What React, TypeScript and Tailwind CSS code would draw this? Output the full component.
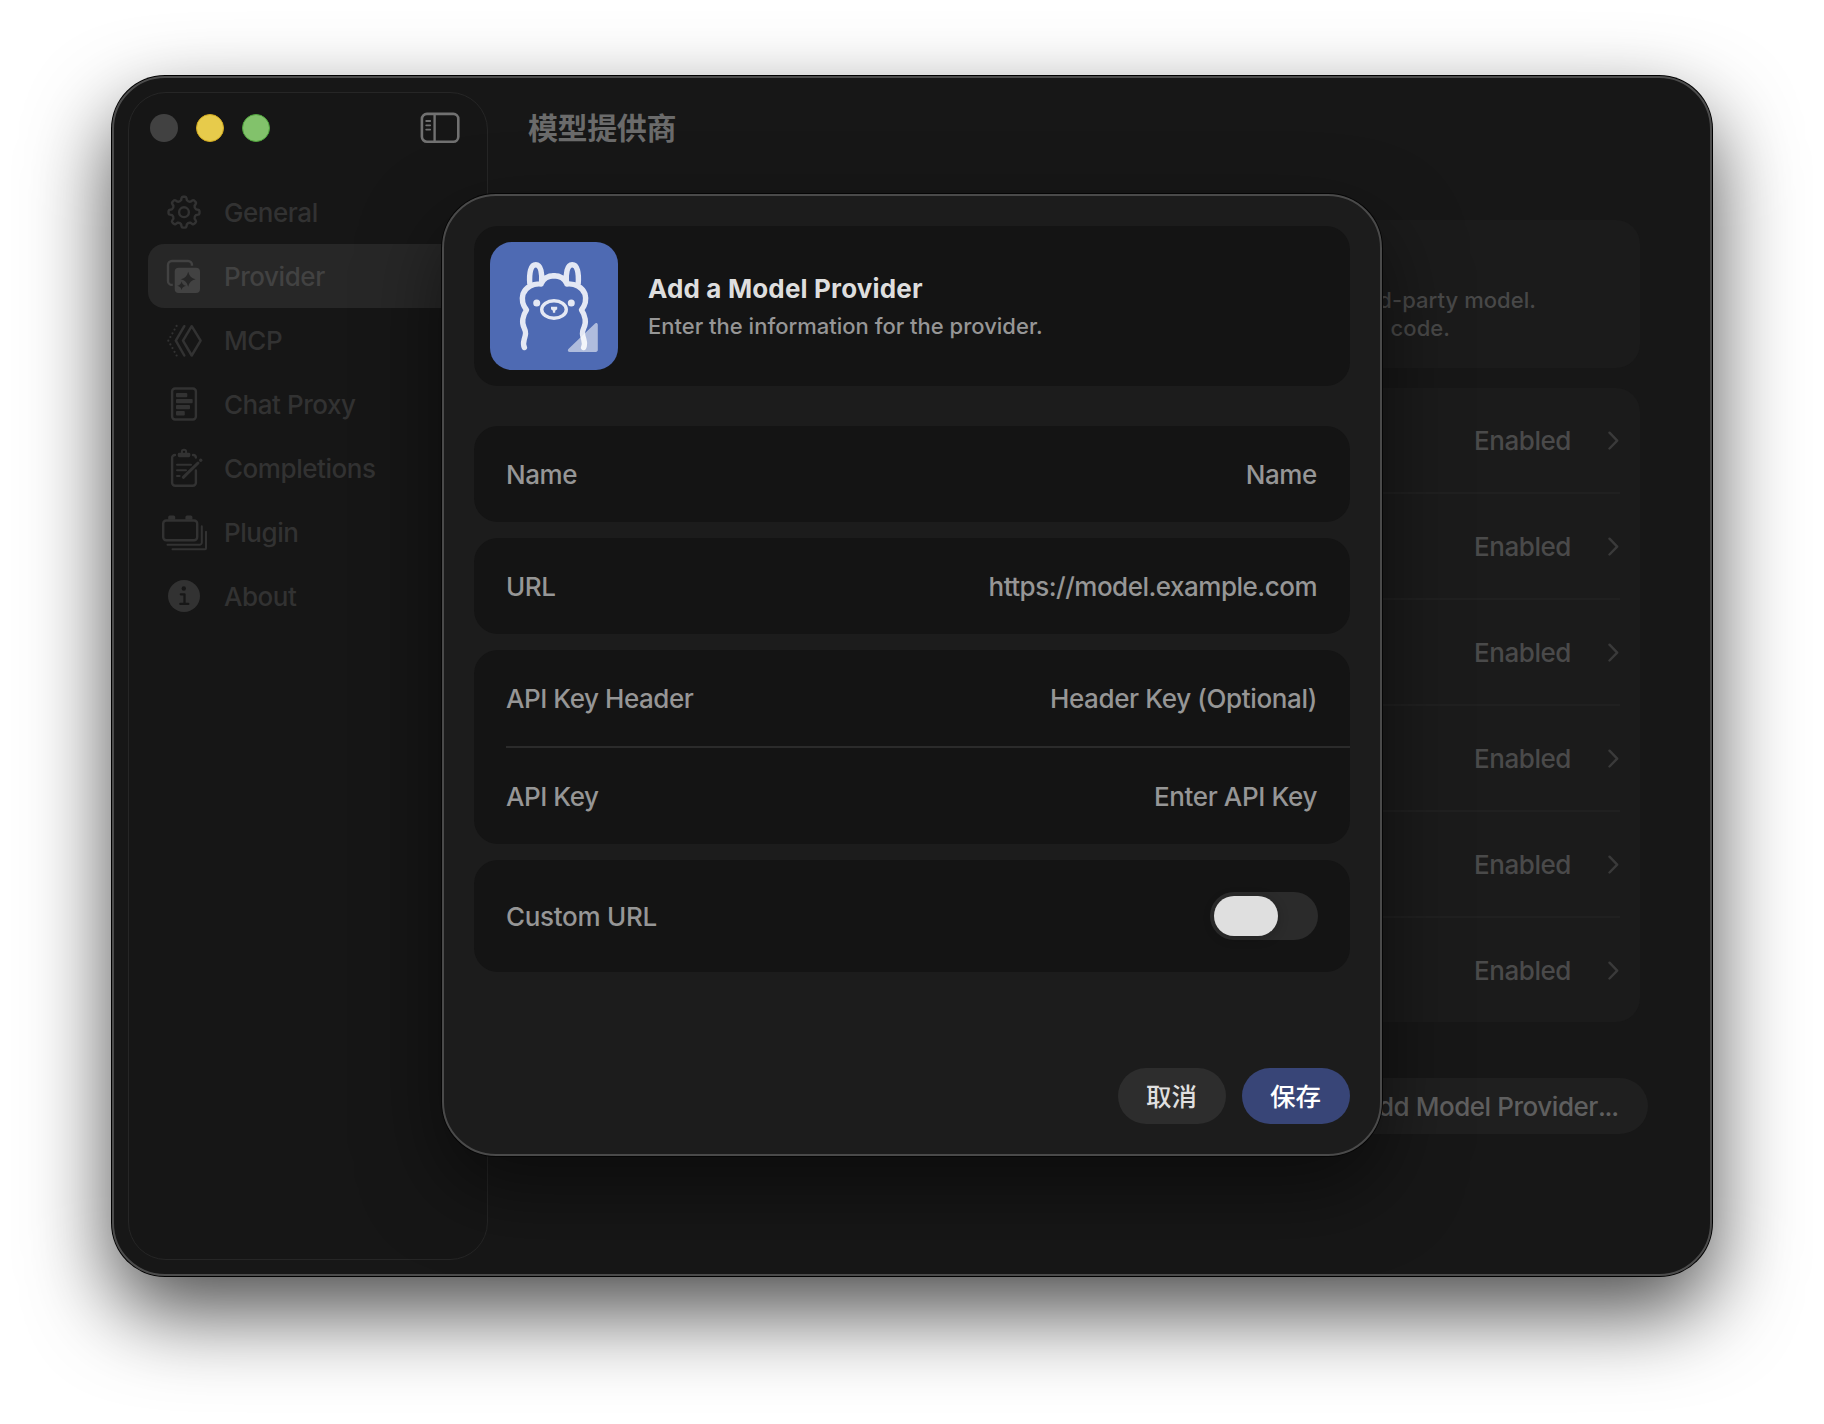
import React from 'react';

type IconProps = { children: React.ReactNode };

function Icon({ children }: IconProps) {
  return (
    <svg
      viewBox="0 0 48 48"
      className="h-12 w-12 shrink-0"
      fill="none"
      stroke="currentColor"
      strokeWidth={2.4}
      strokeLinecap="round"
      strokeLinejoin="round"
    >
      {children}
    </svg>
  );
}

/* Eight-toothed gear outline, centred on 24,24. */
function gearPath(): string {
  const p = (deg: number, r: number) => {
    const a = ((deg - 90) * Math.PI) / 180;
    return `${(24 + r * Math.cos(a)).toFixed(2)} ${(24.2 + r * Math.sin(a)).toFixed(2)}`;
  };
  let d = `M${p(-13.5, 12.4)}`;
  for (let k = 0; k < 8; k++) {
    const c = k * 45;
    d += `L${p(c - 10, 14.3)}Q${p(c - 8.5, 15.5)} ${p(c - 4, 15.5)}L${p(c + 4, 15.5)}Q${p(c + 8.5, 15.5)} ${p(c + 10, 14.3)}`;
    d += `L${p(c + 13.5, 12.4)}Q${p(c + 22.5, 11)} ${p(c + 31.5, 12.4)}`;
  }
  return d + 'Z';
}

const GearIcon = () => (
  <Icon>
    <path d={gearPath()} />
    <circle cx="24" cy="24.2" r="4.9" />
  </Icon>
);

const ProviderIcon = () => (
  <Icon>
    <path d="M12.8 32.9H12a4 4 0 0 1-4-4V13a4 4 0 0 1 4-4h16a4 4 0 0 1 4 4v.8" strokeLinecap="butt" />
    <path
      stroke="none"
      fill="currentColor"
      fillRule="evenodd"
      d="M18.7 15.7H36a4 4 0 0 1 4 4V37a4 4 0 0 1-4 4H18.7a4 4 0 0 1-4-4V19.7a4 4 0 0 1 4-4ZM28.2 19.8c1.4 4.6 2.9 6.1 7.5 7.5-4.6 1.4-6.1 2.9-7.5 7.5-1.4-4.6-2.9-6.1-7.5-7.5 4.6-1.4 6.1-2.9 7.5-7.5ZM21.6 29.5c.8 2.7 1.6 3.5 4.3 4.3-2.7.8-3.5 1.6-4.3 4.3-.8-2.7-1.6-3.5-4.3-4.3 2.7-.8 3.5-1.6 4.3-4.3Z"
    />
  </Icon>
);

const McpIcon = () => (
  <Icon>
    <path d="M31.7 10.2 40.6 24.7 31.7 39.5 23 24.7Z" strokeWidth="2.5" />
    <path d="M24.3 10.2 15.8 24.7 24.3 39.5" strokeWidth="2.5" />
    <path d="M16.6 9.9 8.3 24.7 16.6 39.5" strokeWidth="2.2" strokeDasharray="0 4.24" />
  </Icon>
);

const ChatIcon = () => (
  <Icon>
    <rect x="12.1" y="8.5" width="23.8" height="31" rx="3" />
    <g stroke="none" fill="currentColor">
      <rect x="16" y="13" width="11.3" height="4.2" rx=".9" />
      <rect x="16" y="19" width="16.7" height="4.2" rx=".9" />
      <rect x="16" y="25" width="14" height="4.2" rx=".9" />
      <rect x="16" y="31" width="8.8" height="4.4" rx=".9" />
    </g>
  </Icon>
);

const CompletionsIcon = () => (
  <Icon>
    <path d="M15 11h-.1a2.8 2.8 0 0 0-2.8 2.8V38.8a3 3 0 0 0 3 3h17.8a3 3 0 0 0 3-3V26.5M33 11h.1A2.8 2.8 0 0 1 35.9 13.5" />
    <circle cx="24" cy="8" r="2.2" strokeWidth="1.9" />
    <rect x="17.8" y="8.8" width="12.5" height="4.4" rx="1.4" fill="currentColor" stroke="none" />
    <path d="M17 20.7h14M17 26.3h9M17 32.1h2.6" strokeWidth="2" />
    <path d="M23.3 33.3 38 19" strokeWidth="3" />
    <circle cx="40.7" cy="16.3" r="1.7" fill="currentColor" stroke="none" />
  </Icon>
);

const PluginIcon = () => (
  <Icon>
    <rect x="3.2" y="12.5" width="34" height="19.8" rx="3" />
    <path
      d="M8.2 11.8V9a1.5 1.5 0 0 1 1.5-1.5h4A1.5 1.5 0 0 1 15.2 9v2.8ZM25.4 11.8V9a1.5 1.5 0 0 1 1.5-1.5h4A1.5 1.5 0 0 1 32.4 9v2.8Z"
      fill="currentColor"
      stroke="none"
    />
    <path d="M7.5 36.8h32a2.3 2.3 0 0 0 2.3-2.3V18.3M12.5 41.2H45a1 1 0 0 0 1-1V23.8" strokeWidth="2" />
  </Icon>
);

const AboutIcon = () => (
  <Icon>
    <circle cx="24" cy="24" r="16" fill="currentColor" stroke="none" />
    <g className="text-[#171717]">
      <circle cx="23.8" cy="16.5" r="2.2" fill="currentColor" stroke="none" />
      <path d="M20.8 22.3h3.7v9.3M20.3 31.9h8" strokeWidth="2.3" />
    </g>
  </Icon>
);

const navItems = [
  { label: 'General', icon: <GearIcon /> },
  { label: 'Provider', icon: <ProviderIcon />, active: true },
  { label: 'MCP', icon: <McpIcon /> },
  { label: 'Chat Proxy', icon: <ChatIcon /> },
  { label: 'Completions', icon: <CompletionsIcon /> },
  { label: 'Plugin', icon: <PluginIcon /> },
  { label: 'About', icon: <AboutIcon /> },
];

function Sidebar() {
  return (
    <aside className="flex w-[360px] shrink-0 flex-col rounded-[38px] border border-[#262626] bg-[#161616]">
      <div className="flex h-[70px] items-center justify-between pl-[21px] pr-[27px]">
        <div className="flex gap-[18px]">
          <span className="h-7 w-7 rounded-full bg-[#414141]" />
          <span className="h-7 w-7 rounded-full border border-[#d3ab1f] bg-[#e7cb4b]" />
          <span className="h-7 w-7 rounded-full border border-[#4fa43c] bg-[#82c26b]" />
        </div>
        <svg viewBox="0 0 40 32" className="h-8 w-10 text-[#717171]" fill="none" stroke="currentColor">
          <rect x="1.9" y="1.9" width="36.4" height="27.8" rx="5" strokeWidth="2.6" />
          <path d="M14.6 2v28" strokeWidth="2.4" />
          <path d="M6.2 9h4M6.2 13.3h4M6.2 17.6h4" strokeWidth="1.8" strokeLinecap="round" />
        </svg>
      </div>
      <nav className="mt-[17px] flex flex-col px-[19px]">
        {navItems.map((item) => (
          <div
            key={item.label}
            className={
              item.active
                ? 'flex h-16 items-center gap-4 rounded-2xl bg-[#272727] pl-3 text-[#424242]'
                : 'flex h-16 items-center gap-4 pl-3 text-[#323232]'
            }
          >
            {item.icon}
            <span className="text-[26px] tracking-[-0.45px]">{item.label}</span>
          </div>
        ))}
      </nav>
    </aside>
  );
}

function ProviderPage() {
  return (
    <main className="flex flex-1 flex-col pl-10 pr-[70px]">
      <h1 className="flex h-[72px] items-center pb-1 font-['Noto_Sans_CJK_SC',sans-serif] text-[30px] font-bold tracking-[-0.4px] text-[#6b6b6b]">
        模型提供商
      </h1>
      <section className="mt-14 flex h-[148px] flex-col items-end justify-end rounded-3xl bg-[#1b1b1b] pb-[26px] text-[22px] leading-7 tracking-[0.05px] text-[#484848]">
        <p className="pr-[104px]">third-party model.</p>
        <p className="pr-[190px]">code.</p>
      </section>
      <section className="mt-5 rounded-3xl bg-[#1b1b1b] px-5">
        {[0, 1, 2, 3, 4, 5].map((i) => (
          <div
            key={i}
            className={
              i < 5
                ? 'flex h-[106px] items-center justify-end border-b-2 border-[#202020]'
                : 'flex h-[104px] items-center justify-end'
            }
          >
            <span className="text-[26px] tracking-[-0.45px] text-[#4a4a4a]">Enabled</span>
            <svg
              viewBox="0 0 12 20"
              className="ml-[37px] h-5 w-3 text-[#3a3a3a]"
              fill="none"
              stroke="currentColor"
              strokeWidth={2.4}
              strokeLinecap="round"
              strokeLinejoin="round"
            >
              <path d="M1.5 2.7 9.2 10.6 1.5 18.5" />
            </svg>
          </div>
        ))}
      </section>
      <button className="mr-[-8px] mt-14 h-14 self-end rounded-full bg-[#1f1f1f] px-[30px] text-[26px] tracking-[-0.45px] text-[#5f5f5f]">
        Add Model Provider<span className="tracking-[-1.2px]">...</span>
      </button>
    </main>
  );
}

function LlamaTile() {
  const half =
    'M39.8 41.6C39 31 40.6 22.8 45.8 22.8S52.4 32 51.6 41M64 33.7C58 33.7 53.4 36.6 51.2 41.6M51.2 42C43 41.2 35.6 45 33 52C31.6 57 33 63.5 36.5 68C32.6 73.5 31.4 81 34.2 86C36.4 90.5 35.6 93 34.2 97.5C33.2 101 33.4 103.5 34.4 105.5';
  return (
    <svg viewBox="0 0 128 128" className="h-32 w-32 rounded-[22px] bg-[#4e6ab3]">
      <g fill="none" stroke="#e4e8f4" strokeWidth="5.4" strokeLinecap="round" strokeLinejoin="round">
        <path d={half} />
        <path d={half} transform="matrix(-1 0 0 1 128 0)" />
        <ellipse cx="64" cy="67.5" rx="12.3" ry="8.8" strokeWidth="3.4" />
      </g>
      <g fill="#e4e8f4">
        <circle cx="46.7" cy="61" r="3.5" />
        <circle cx="81.3" cy="61" r="3.5" />
        <path d="M61 64.8h6.2v2.4l-2 1.600v2h-2.300v-2L61 67.200Z" />
      </g>
      <path
        d="M104.8 81.7c1.1-1.2 3-.5 3 1.2v25.2c0 1.1-.8 1.9-1.9 1.9H79.7c-1.7 0-2.5-1.9-1.3-3.1Z"
        fill="#fff"
        fillOpacity=".55"
      />
    </svg>
  );
}

function Row({ label, value }: { label: string; value: string }) {
  return (
    <div className="flex h-24 items-center justify-between pl-8 pr-[33px] text-[26px] tracking-[-0.45px]">
      <span>{label}</span>
      <span className={value.startsWith('https') ? 'tracking-[-0.5px]' : 'tracking-[-0.37px]'}>{value}</span>
    </div>
  );
}

function ProviderDialog() {
  return (
    <div
      role="dialog"
      className="absolute left-[328px] top-[116px] flex h-[962px] w-[940px] flex-col rounded-[54px] border-2 border-[#4a4a4a] bg-[#1c1c1c] p-[30px] text-[#969696] shadow-[0_0_0_1px_#050505,0_32px_80px_rgba(0,0,0,0.5)]"
    >
      <header className="flex h-40 items-center gap-[30px] rounded-3xl bg-[#141414] pl-4">
        <LlamaTile />
        <div>
          <h2 className="text-[26px] font-bold leading-10 tracking-[0.15px] text-[#dedede]">Add a Model Provider</h2>
          <p className="text-[22px] leading-[34px]">Enter the information for the provider.</p>
        </div>
      </header>
      <div className="mt-10 flex flex-col gap-4">
        <section className="rounded-3xl bg-[#141414]">
          <Row label="Name" value="Name" />
        </section>
        <section className="rounded-3xl bg-[#141414]">
          <Row label="URL" value="https://model.example.com" />
        </section>
        <section className="rounded-3xl bg-[#141414]">
          <Row label="API Key Header" value="Header Key (Optional)" />
          <div className="ml-8 h-0.5 bg-[#2b2b2b]" />
          <Row label="API Key" value="Enter API Key" />
        </section>
        <section className="flex h-28 items-center justify-between rounded-3xl bg-[#141414] px-8 text-[26px]">
          <span className="tracking-[-0.3px]">Custom URL</span>
          <span className="flex h-12 w-[108px] rounded-full bg-[#2b2b2b] p-1">
            <span className="h-10 w-16 rounded-full bg-[#dfdfdf] shadow-[0_2px_12px_rgba(0,0,0,0.2)]" />
          </span>
        </section>
      </div>
      <footer className="mt-auto flex justify-end gap-4 font-['Noto_Sans_CJK_SC',sans-serif] text-[25.5px] font-medium">
        <button className="h-14 w-[108px] rounded-full bg-[#2d2d2d] pb-0.5 pr-px text-[#dfdfdf]">取消</button>
        <button className="h-14 w-[108px] rounded-full bg-[#384577] pb-0.5 pr-px text-white">保存</button>
      </footer>
    </div>
  );
}

export default function App() {
  return (
    <div className="flex h-[1424px] w-[1824px] items-start justify-center overflow-hidden bg-white pt-[76px] font-[Inter,sans-serif] font-[450]">
      <div className="relative flex h-[1200px] w-[1600px] rounded-[53px] border-2 border-[#4c4c4c] bg-[#171717] shadow-[0_0_0_1px_#000,0_36px_84px_rgba(0,0,0,0.7)]">
        <div className="flex flex-1 p-3.5 pr-0">
          <Sidebar />
          <ProviderPage />
        </div>
        <ProviderDialog />
      </div>
    </div>
  );
}
